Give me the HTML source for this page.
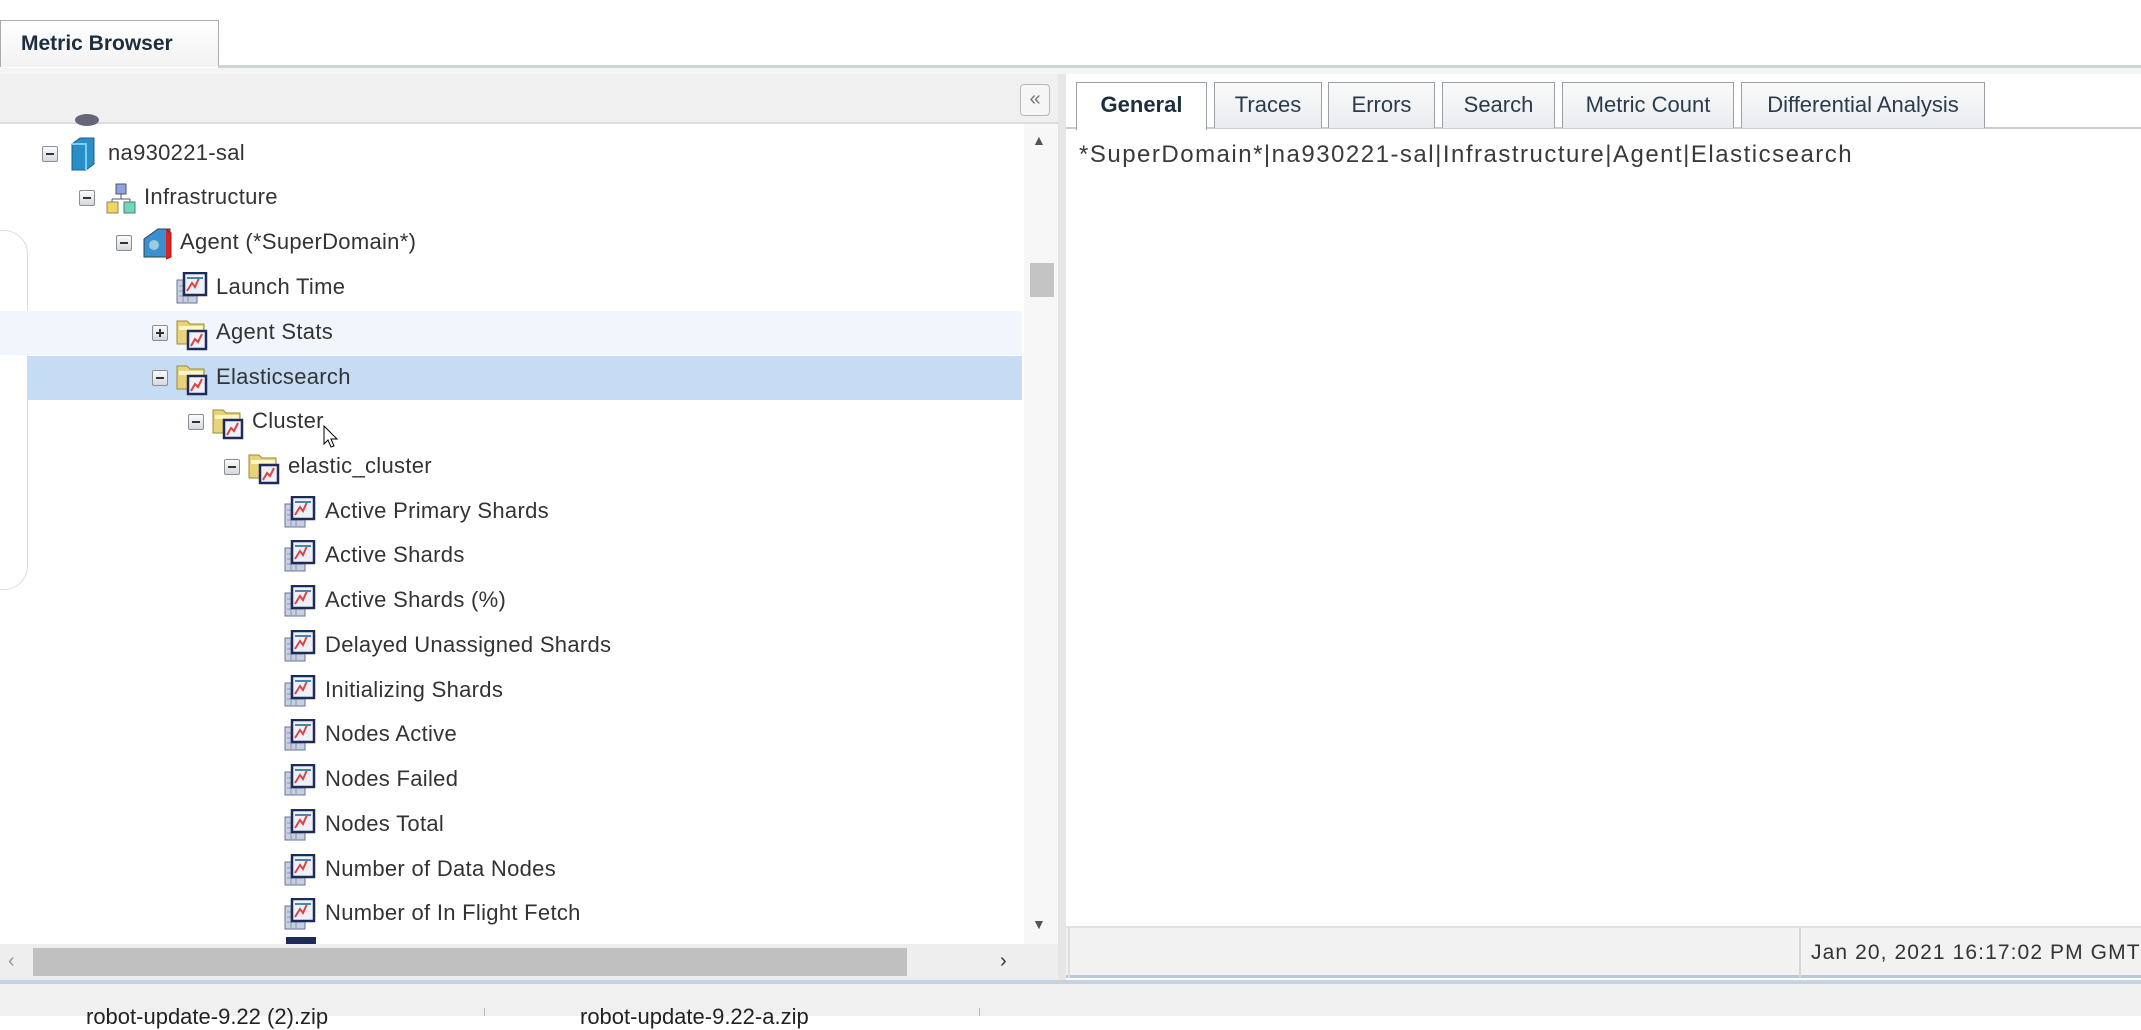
<!DOCTYPE html>
<html><head><meta charset="utf-8"><style>
*{margin:0;padding:0;box-sizing:border-box}
body{width:2141px;height:1016px;background:#fff;font-family:"Liberation Sans","DejaVu Sans",sans-serif;color:#333;position:relative;overflow:hidden}
.a{position:absolute}
.row{position:absolute;height:44px;left:0;width:1022px}
.t{position:absolute;top:8px;font-size:22px;color:#333;white-space:nowrap;letter-spacing:0.3px}
.ex{position:absolute;top:14px;width:16px;height:16px;border:1px solid #8a8f96;background:linear-gradient(#fbfbfb,#d4d8de);border-radius:2px}
.ex:after{content:"";position:absolute;left:3px;top:6px;width:8px;height:2px;background:#333}
.ex.p:before{content:"";position:absolute;left:6px;top:3px;width:2px;height:8px;background:#333}
.ic{position:absolute;top:6px}
.tab{position:absolute;top:82px;height:46px;border:1px solid #9aa0a6;border-bottom:none;background:linear-gradient(#fafafa,#e9ecef);font-size:22px;color:#2a3b4c;text-align:center;line-height:44px}
</style></head><body>
<div class="a" style="left:0;top:20px;width:219px;height:47px;border:1px solid #a8acb0;border-bottom:none;background:linear-gradient(#fff,#f2f2f2);font-weight:bold;font-size:21px;color:#1d2e3f;line-height:46px;padding-left:20px">Metric Browser</div>
<div class="a" style="left:218px;top:65px;width:1923px;height:3px;background:#d0d3d6"></div>
<div class="a" style="left:0;top:68px;width:2141px;height:6px;background:#f4f4f4"></div>

<div class="a" style="left:0;top:74px;width:1058px;height:50px;background:#f0f0f0;border-bottom:2px solid #dcdcdc"></div>
<div class="a" style="left:1020px;top:84px;width:30px;height:32px;border:1px solid #b5b8bc;border-radius:4px;background:#f6f6f6;color:#777;font-size:20px;text-align:center;line-height:28px">«</div>
<div class="a" style="left:0;top:124px;width:1024px;height:820px;background:#fff"></div>
<div class="a" style="left:0;top:230px;width:28px;height:360px;border:1px solid #ddd;border-left:none;border-radius:0 24px 24px 0"></div>
<div class="a" style="left:1024px;top:124px;width:34px;height:822px;background:#f7f7f7"></div>
<div class="a" style="left:1032px;top:132px;color:#555;font-size:14px">▲</div>
<div class="a" style="left:1030px;top:263px;width:24px;height:34px;background:#c4c4c4"></div>
<div class="a" style="left:1032px;top:916px;color:#555;font-size:14px">▼</div>
<div class="a" style="left:0;top:944px;width:1058px;height:36px;background:#eeeeee"></div>
<div class="a" style="left:33px;top:948px;width:874px;height:28px;background:#c0c0c0"></div>
<div class="a" style="left:8px;top:950px;color:#999;font-size:20px">‹</div>
<div class="a" style="left:1000px;top:950px;color:#333;font-size:20px">›</div>
<div class="a" style="left:1058px;top:74px;width:8px;height:906px;background:#e6e6e6"></div>

<svg width="0" height="0" style="position:absolute">
<defs>
<g id="m"><rect x="1" y="8" width="20" height="23" fill="#c8d0e0" stroke="#6a7598"/><path d="M3 14h16M3 19h16M3 24h16M7 10v20M12 10v20" stroke="#8793b5" stroke-width="1"/><rect x="8" y="1" width="22" height="22" fill="#eef1f8" stroke="#1e2a5a" stroke-width="2.5"/><path d="M11 19l5-8 3 4 4-9" stroke="#d44" stroke-width="2" fill="none"/><path d="M11 6h16" stroke="#48a" stroke-width="2"/></g>
<g id="f"><path d="M1 4h10l3 3h14v20H1z" fill="#e8d27a" stroke="#9c8a3a"/><path d="M3 9h24v4H3z" fill="#fff6c8"/><rect x="12" y="14" width="18" height="18" fill="#eef1f8" stroke="#1e2a5a" stroke-width="2.5"/><path d="M15 29l4-7 3 3 4-8" stroke="#d44" stroke-width="2" fill="none"/></g>
</defs></svg>

<div class="row" style="top:104px"><div class="a" style="left:75px;top:10px;width:24px;height:12px;background:#667;border-radius:50%"></div></div>

<div class="row" style="top:132px"><div class="ex" style="left:42px"></div>
<svg class="ic" style="left:68px;top:4px" width="30" height="36"><path d="M4 8l8-6h14v26l-8 6H4z" fill="#2a8fc8" stroke="#1a5f8a"/><path d="M4 8h14v26" fill="none" stroke="#7fd0f0" stroke-width="2"/></svg>
<div class="t" style="left:108px">na930221-sal</div></div>

<div class="row" style="top:176px"><div class="ex" style="left:79px"></div>
<svg class="ic" style="left:106px;top:6px" width="30" height="32"><rect x="10" y="2" width="10" height="10" fill="#8fa3e0" stroke="#556"/><path d="M15 12v5M6 17h18M6 17v4M24 17v4" stroke="#556" fill="none"/><rect x="1" y="20" width="11" height="11" fill="#f0d660" stroke="#886"/><rect x="18" y="20" width="11" height="11" fill="#6fd8b8" stroke="#577"/></svg>
<div class="t" style="left:144px">Infrastructure</div></div>

<div class="row" style="top:221px"><div class="ex" style="left:116px"></div>
<svg class="ic" style="left:140px;top:4px" width="34" height="36"><path d="M4 14l14-10h12v28H4z" fill="#3c8fd0" stroke="#245"/><circle cx="14" cy="20" r="5" fill="#9cd"/><path d="M26 4l5 4v24l-5 2" fill="#d22" stroke="#a11"/></svg>
<div class="t" style="left:180px">Agent (*SuperDomain*)</div></div>

<div class="row" style="top:266px"><svg class="ic" style="left:176px" width="32" height="34"><use href="#m"/></svg><div class="t" style="left:216px">Launch Time</div></div>

<div class="row" style="top:311px;background:#f0f6fc"><div class="ex p" style="left:152px"></div><svg class="ic" style="left:176px" width="32" height="34"><use href="#f"/></svg><div class="t" style="left:216px">Agent Stats</div></div>

<div class="row" style="top:356px;left:28px;width:994px;background:#c6dcf5"></div>
<div class="row" style="top:356px"><div class="ex" style="left:152px"></div><svg class="ic" style="left:176px" width="32" height="34"><use href="#f"/></svg><div class="t" style="left:216px">Elasticsearch</div></div>

<div class="row" style="top:400px"><div class="ex" style="left:188px"></div><svg class="ic" style="left:212px" width="32" height="34"><use href="#f"/></svg><div class="t" style="left:252px">Cluster</div>
<svg class="a" style="left:323px;top:25px" width="16" height="24"><path d="M1 1v18l4-4 3 7 3-1-3-7h6z" fill="#fff" stroke="#000"/></svg></div>

<div class="row" style="top:445px"><div class="ex" style="left:224px"></div><svg class="ic" style="left:248px" width="32" height="34"><use href="#f"/></svg><div class="t" style="left:288px">elastic_cluster</div></div>

<div class="row" style="top:490px"><svg class="ic" style="left:284px" width="32" height="34"><use href="#m"/></svg><div class="t" style="left:325px">Active Primary Shards</div></div>
<div class="row" style="top:534px"><svg class="ic" style="left:284px" width="32" height="34"><use href="#m"/></svg><div class="t" style="left:325px">Active Shards</div></div>
<div class="row" style="top:579px"><svg class="ic" style="left:284px" width="32" height="34"><use href="#m"/></svg><div class="t" style="left:325px">Active Shards (%)</div></div>
<div class="row" style="top:624px"><svg class="ic" style="left:284px" width="32" height="34"><use href="#m"/></svg><div class="t" style="left:325px">Delayed Unassigned Shards</div></div>
<div class="row" style="top:669px"><svg class="ic" style="left:284px" width="32" height="34"><use href="#m"/></svg><div class="t" style="left:325px">Initializing Shards</div></div>
<div class="row" style="top:713px"><svg class="ic" style="left:284px" width="32" height="34"><use href="#m"/></svg><div class="t" style="left:325px">Nodes Active</div></div>
<div class="row" style="top:758px"><svg class="ic" style="left:284px" width="32" height="34"><use href="#m"/></svg><div class="t" style="left:325px">Nodes Failed</div></div>
<div class="row" style="top:803px"><svg class="ic" style="left:284px" width="32" height="34"><use href="#m"/></svg><div class="t" style="left:325px">Nodes Total</div></div>
<div class="row" style="top:848px"><svg class="ic" style="left:284px" width="32" height="34"><use href="#m"/></svg><div class="t" style="left:325px">Number of Data Nodes</div></div>
<div class="row" style="top:892px"><svg class="ic" style="left:284px" width="32" height="34"><use href="#m"/></svg><div class="t" style="left:325px">Number of In Flight Fetch</div></div>
<div class="a" style="left:286px;top:937px;width:30px;height:7px;background:#1e2a5a"></div>

<div class="a" style="left:1066px;top:74px;width:1075px;height:906px;background:#fff"></div>
<div class="a" style="left:1066px;top:127px;width:1075px;height:2px;background:#c8ccd0"></div>
<div class="tab" style="left:1076px;width:131px;background:#fff;height:48px;font-weight:bold;color:#1d2e3f">General</div>
<div class="tab" style="left:1214px;width:108px">Traces</div>
<div class="tab" style="left:1328px;width:107px">Errors</div>
<div class="tab" style="left:1442px;width:113px">Search</div>
<div class="tab" style="left:1562px;width:172px">Metric Count</div>
<div class="tab" style="left:1741px;width:244px">Differential Analysis</div>
<div class="a" style="left:1079px;top:141px;font-size:24px;color:#3a3a3a;letter-spacing:1.5px;white-space:nowrap">*SuperDomain*|na930221-sal|Infrastructure|Agent|Elasticsearch</div>
<div class="a" style="left:1066px;top:926px;width:1075px;height:52px;background:#f2f2f2;border-top:2px solid #e0e0e0;border-bottom:3px solid #b8c8dc"></div>
<div class="a" style="left:1068px;top:928px;width:2px;height:50px;background:#ddd"></div>
<div class="a" style="left:1799px;top:928px;width:2px;height:50px;background:#d8d8d8"></div>
<div class="a" style="left:1811px;top:941px;font-size:21px;letter-spacing:1.1px;color:#333;white-space:nowrap">Jan 20, 2021 16:17:02 PM GMT</div>

<div class="a" style="left:0;top:980px;width:2141px;height:4px;background:#c6d2e0"></div>
<div class="a" style="left:0;top:984px;width:2141px;height:32px;background:#f0f0f0"></div>
<div class="a" style="left:86px;top:1004px;font-size:22px;color:#222">robot-update-9.22 (2).zip</div>
<div class="a" style="left:484px;top:1008px;width:1px;height:8px;background:#bbb"></div>
<div class="a" style="left:580px;top:1004px;font-size:22px;color:#222">robot-update-9.22-a.zip</div>
<div class="a" style="left:979px;top:1008px;width:1px;height:8px;background:#bbb"></div>
</body></html>
